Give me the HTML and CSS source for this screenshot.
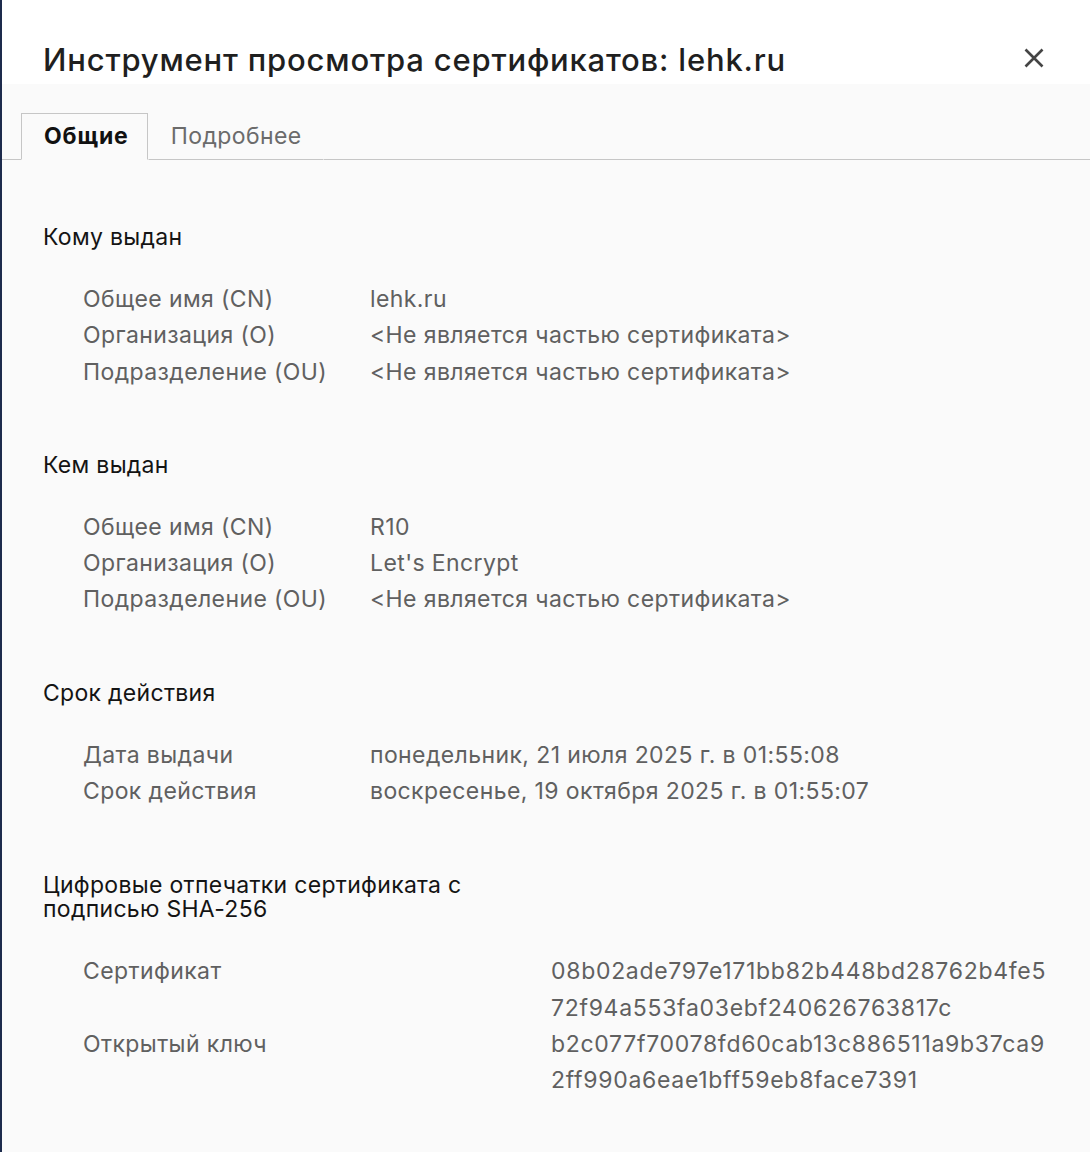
FILE: index.html
```html
<!DOCTYPE html>
<html lang="ru">
<head>
<meta charset="utf-8">
<title>Инструмент просмотра сертификатов</title>
<link rel="stylesheet" href="styles.css">
</head>
<body>
<div class="dialog">
  <header class="header">
    <h1 class="title">Инструмент просмотра сертификатов: lehk.ru</h1>
    <button class="close" aria-label="Закрыть">
      <svg width="20" height="20" viewBox="0 0 20 20"><path d="M1.5 1.5 L18.5 18.5 M18.5 1.5 L1.5 18.5" stroke="#454545" stroke-width="2.6" stroke-linecap="butt" fill="none"/></svg>
    </button>
  </header>
  <main class="body">
    <nav class="tabs">
      <div class="tab active">Общие</div>
      <div class="tab">Подробнее</div>
      <div class="tab-fill"></div>
    </nav>
    <div class="content">
      <section class="section">
        <h2 class="heading">Кому выдан</h2>
        <div class="rows">
          <div class="label">Общее имя (CN)</div><div class="value">lehk.ru</div>
          <div class="label">Организация (O)</div><div class="value">&lt;Не является частью сертификата&gt;</div>
          <div class="label">Подразделение (OU)</div><div class="value">&lt;Не является частью сертификата&gt;</div>
        </div>
      </section>
      <section class="section">
        <h2 class="heading">Кем выдан</h2>
        <div class="rows">
          <div class="label">Общее имя (CN)</div><div class="value">R10</div>
          <div class="label">Организация (O)</div><div class="value">Let's Encrypt</div>
          <div class="label">Подразделение (OU)</div><div class="value">&lt;Не является частью сертификата&gt;</div>
        </div>
      </section>
      <section class="section">
        <h2 class="heading">Срок действия</h2>
        <div class="rows">
          <div class="label">Дата выдачи</div><div class="value">понедельник, 21 июля 2025 г. в 01:55:08</div>
          <div class="label">Срок действия</div><div class="value">воскресенье, 19 октября 2025 г. в 01:55:07</div>
        </div>
      </section>
      <section class="section">
        <h2 class="heading wrap">Цифровые отпечатки сертификата с подписью SHA-256</h2>
        <div class="rows wide">
          <div class="label">Сертификат</div><div class="value hash"><span class="line">08b02ade797e171bb82b448bd28762b4fe5</span><span class="line">72f94a553fa03ebf240626763817c</span></div>
          <div class="label">Открытый ключ</div><div class="value hash"><span class="line">b2c077f70078fd60cab13c886511a9b37ca9</span><span class="line">2ff990a6eae1bff59eb8face7391</span></div>
        </div>
      </section>
    </div>
  </main>
</div>
</body>
</html>
```

FILE: styles.css
```css
html, body {
  margin: 0;
  padding: 0;
  height: 100%;
}
body {
  background: #fafafa;
  font-family: Inter, "Noto Sans", "Liberation Sans", sans-serif;
  border-left: 2px solid #1d2b4c;
  box-sizing: border-box;
}
.dialog {
  display: flex;
  flex-direction: column;
  min-height: 100%;
}
.header {
  background: #ffffff;
  height: 84px;
  display: flex;
  align-items: flex-start;
  justify-content: space-between;
  padding: 0 46px 0 41px;
  box-sizing: border-box;
}
.title {
  margin: 43px 0 0 0;
  font-size: 31px;
  line-height: 34px;
  font-weight: 500;
  color: #1f1f1f;
  letter-spacing: 0.8px;
}
.close {
  margin-top: 48px;
  width: 20px;
  height: 20px;
  padding: 0;
  border: 0;
  background: transparent;
  display: block;
}
.close svg { display: block; }
.body {
  flex: 1;
  background: #fafafa;
}
.tabs {
  display: flex;
  align-items: flex-end;
  padding-top: 29px;
}
.tabs::before {
  content: "";
  width: 19px;
  border-bottom: 1px solid #c6c6c6;
}
.tab {
  font-size: 23px;
  line-height: 45px;
  padding: 0 21px 0 22px;
  color: #6b6b6b;
  letter-spacing: 0.4px;
  border-bottom: 1px solid #c6c6c6;
  border-top: 1px solid transparent;
  border-left: 1px solid transparent;
  border-right: 1px solid transparent;
}
.tab.active {
  font-weight: 700;
  color: #111111;
  letter-spacing: 0.9px;
  padding-right: 18px;
  border-color: #c6c6c6;
  border-bottom-color: transparent;
}
.tab-fill {
  flex: 1;
  border-bottom: 1px solid #c6c6c6;
}
.content {
  padding: 65px 0 0 41px;
  display: flex;
  flex-direction: column;
  gap: 63px;
}
.heading {
  margin: 0 0 32px 0;
  font-size: 23px;
  line-height: 24px;
  font-weight: 400;
  letter-spacing: 0.3px;
  color: #141414;
}
.heading.wrap {
  width: 480px;
  margin-top: 1px;
}
.rows {
  display: grid;
  grid-template-columns: 287px auto;
  padding-left: 40px;
  font-size: 23px;
  line-height: 36.3px;
  letter-spacing: 0.4px;
  color: #606060;
}
.rows.wide {
  grid-template-columns: 468px auto;
}
.hash {
  letter-spacing: 0.7px;
}
.line {
  display: block;
}
```
